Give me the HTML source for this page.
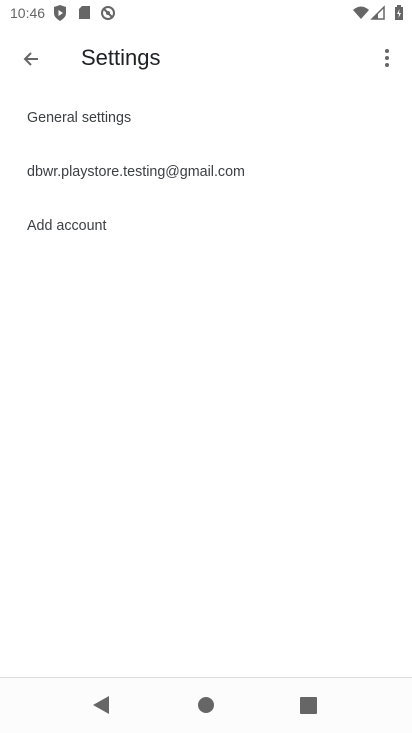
<!DOCTYPE html>
<html><head><meta charset="utf-8"><style>
body{margin:0;width:412px;height:732px;background:#fff;font-family:"Liberation Sans",sans-serif;position:relative;overflow:hidden}
.t{position:absolute;white-space:nowrap}
</style></head><body>
<div class="t" style="left:10px;top:5px;font-size:14px;color:#666">10:46</div>
<svg style="position:absolute;left:52px;top:5px" width="70" height="16">
<path d="M2 2 L8 0 L14 2 V8 C14 12 11 14 8 16 C5 14 2 12 2 8Z" fill="#666"/><path d="M6.5 5 L11 8 L6.5 11Z" fill="#fff"/>
<path d="M30 1 H38 V14 H27 V4Z" fill="#666"/>
<circle cx="56" cy="8" r="6" fill="none" stroke="#666" stroke-width="2"/><path d="M52 4 L60 12" stroke="#666" stroke-width="2"/><circle cx="56" cy="8" r="2" fill="#666"/>
</svg>
<svg style="position:absolute;left:352px;top:5px" width="52" height="16">
<path d="M1 5 Q9 -2 17 5 L9 14Z" fill="#666"/>
<path d="M20 14 L32 2 V14Z" fill="none" stroke="#666" stroke-width="1.5"/><path d="M20 14 L26 8 V14Z" fill="#666"/>
<rect x="43" y="2" width="8" height="13" fill="#666"/><rect x="45" y="0" width="4" height="2" fill="#666"/><path d="M47.5 4 L45 9 H47 L46.5 13 L49 8 H47Z" fill="#fff"/>
</svg>
<svg style="position:absolute;left:20px;top:48px" width="22" height="22"><path d="M18 11 H5 M11 5 L5 11 L11 17" fill="none" stroke="#666" stroke-width="2"/></svg>
<div class="t" style="left:81px;top:45px;font-size:22px;color:#202124">Settings</div>
<svg style="position:absolute;left:383px;top:48px" width="8" height="22"><circle cx="4" cy="3" r="2" fill="#666"/><circle cx="4" cy="10" r="2" fill="#666"/><circle cx="4" cy="17" r="2" fill="#666"/></svg>
<div class="t" style="left:27px;top:110px;font-size:14.3px;color:#3c4043">General settings</div>
<div class="t" style="left:27px;top:164px;font-size:14.3px;color:#3c4043">dbwr.playstore.testing@gmail.com</div>
<div class="t" style="left:27px;top:218px;font-size:14.3px;color:#3c4043">Add account</div>
<div style="position:absolute;left:0;top:677px;width:412px;height:55px;background:#fcfcfc;border-top:1px solid #ddd"></div>
<svg style="position:absolute;left:0;top:678px" width="412" height="54">
<path d="M93 27 L109 18 V36Z" fill="#666"/>
<circle cx="206" cy="27" r="8" fill="#666"/>
<rect x="300" y="19" width="17" height="17" rx="1" fill="#666"/>
</svg>
</body></html>
